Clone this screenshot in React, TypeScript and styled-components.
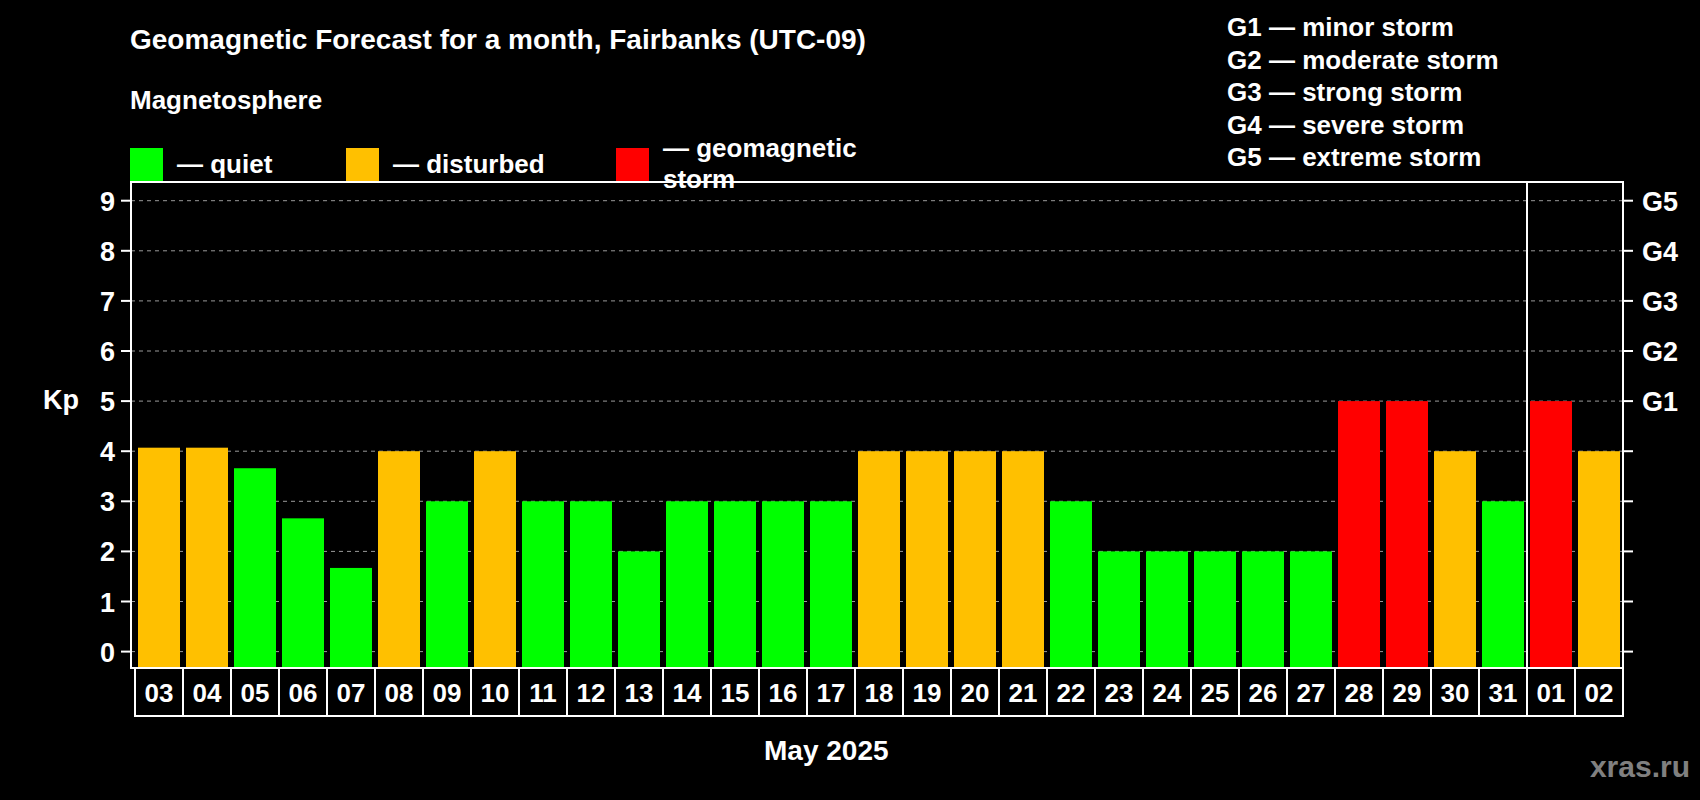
import React from "react";
import styled, { createGlobalStyle } from "styled-components";

const Global = createGlobalStyle`
  html, body { margin: 0; padding: 0; background: #000; }
  body { font-family: "Liberation Sans", Arial, sans-serif; }
`;

const Page = styled.div`
  width: 1700px;
  height: 800px;
  background: #000;
  color: #fff;
  font-weight: bold;
  display: flex;
  flex-direction: column;
  overflow: hidden;
`;

const Header = styled.div`
  height: 170px;
  display: flex;
  justify-content: space-between;
`;

const LeftHead = styled.div`
  padding: 24px 0 0 130px;
  display: flex;
  flex-direction: column;
`;

const Title = styled.div`
  font-size: 28px;
  line-height: 32px;
`;

const Sub = styled.div`
  font-size: 26px;
  line-height: 30px;
  margin-top: 29px;
`;

const LegendRow = styled.div`
  display: flex;
  align-items: center;
  margin-top: 18px;
`;

const LegendItem = styled.div<{ $w: number }>`
  display: flex;
  align-items: center;
  width: ${(p) => p.$w}px;
  font-size: 26px;
`;

const Swatch = styled.span<{ $c: string }>`
  width: 33px;
  height: 33px;
  background: ${(p) => p.$c};
  margin-right: 14px;
  flex: none;
`;

const GList = styled.div`
  padding: 11px 0 0 0;
  width: 473px;
  font-size: 26px;
  line-height: 32.5px;
`;

const Chart = styled.svg`
  display: block;
  width: 1700px;
  height: 555px;
`;

const Footer = styled.div`
  flex: 1;
  display: flex;
  align-items: flex-start;
`;

const Month = styled.div`
  margin-left: 764px;
  margin-top: 10px;
  font-size: 28px;
`;

const Brand = styled.div`
  margin-left: auto;
  margin-right: 10px;
  margin-top: 25px;
  font-size: 30px;
  color: #808080;
`;

const GREEN = "#00ff00";
const ORANGE = "#ffc000";
const RED = "#ff0000";

const days: [string, number][] = [
  ["03", 4.07], ["04", 4.07], ["05", 3.66], ["06", 2.66], ["07", 1.67], ["08", 4], ["09", 3],
  ["10", 4], ["11", 3], ["12", 3], ["13", 2], ["14", 3], ["15", 3], ["16", 3], ["17", 3],
  ["18", 4], ["19", 4], ["20", 4], ["21", 4], ["22", 3], ["23", 2], ["24", 2], ["25", 2],
  ["26", 2], ["27", 2], ["28", 5], ["29", 5], ["30", 4], ["31", 3], ["01", 5], ["02", 4],
];

const color = (v: number) => (v >= 5 ? RED : v >= 4 ? ORANGE : GREEN);

const Y0 = 651.6;
const U = 50.1;
const X0 = 135;
const CW = 48;
const TOP = 182;
const BOT = 668;
const RIGHT = 1623;
const yOf = (v: number) => Y0 - U * v;

export default function App() {
  return (
    <Page>
      <Global />
      <Header>
        <LeftHead>
          <Title>Geomagnetic Forecast for a month, Fairbanks (UTC-09)</Title>
          <Sub>Magnetosphere</Sub>
          <LegendRow>
            <LegendItem $w={216}><Swatch $c={GREEN} />— quiet</LegendItem>
            <LegendItem $w={270}><Swatch $c={ORANGE} />— disturbed</LegendItem>
            <LegendItem $w={320}><Swatch $c={RED} />— geomagnetic storm</LegendItem>
          </LegendRow>
        </LeftHead>
        <GList>
          <div>G1 — minor storm</div>
          <div>G2 — moderate storm</div>
          <div>G3 — strong storm</div>
          <div>G4 — severe storm</div>
          <div>G5 — extreme storm</div>
        </GList>
      </Header>
      <Chart viewBox="0 170 1700 555" fontFamily="Liberation Sans, Arial, sans-serif" fontWeight="bold">
        {Array.from({ length: 10 }, (_, i) => (
          <g key={i}>
            <line x1={131} x2={RIGHT} y1={yOf(i)} y2={yOf(i)} stroke="#9a9a9a" strokeWidth={1} strokeDasharray="4 4" />
            <line x1={121} x2={131} y1={yOf(i)} y2={yOf(i)} stroke="#fff" strokeWidth={2} />
            <line x1={RIGHT} x2={1633} y1={yOf(i)} y2={yOf(i)} stroke="#fff" strokeWidth={2} />
            <text x={115} y={yOf(i) + 10} fontSize={27} fill="#fff" textAnchor="end">{i}</text>
            {i >= 5 && (
              <text x={1642} y={yOf(i) + 10} fontSize={27} fill="#fff">G{i - 4}</text>
            )}
          </g>
        ))}
        {days.map(([d, v], i) => (
          <rect key={d} x={X0 + i * CW + 3} width={42} y={yOf(v)} height={BOT - yOf(v)} fill={color(v)} />
        ))}
        <rect x={131} y={TOP} width={RIGHT - 131} height={BOT - TOP} fill="none" stroke="#fff" strokeWidth={2} />
        <line x1={X0 + 29 * CW} x2={X0 + 29 * CW} y1={TOP} y2={BOT} stroke="#fff" strokeWidth={2} />
        <rect x={X0} y={BOT} width={RIGHT - X0} height={48} fill="none" stroke="#fff" strokeWidth={2} />
        {days.map(([d], i) => (
          <g key={"c" + d}>
            {i > 0 && <line x1={X0 + i * CW} x2={X0 + i * CW} y1={BOT} y2={BOT + 48} stroke="#fff" strokeWidth={2} />}
            <text x={X0 + i * CW + CW / 2} y={BOT + 34} fontSize={26} fill="#fff" textAnchor="middle">{d}</text>
          </g>
        ))}
        <text x={43} y={409} fontSize={27} fill="#fff">Kp</text>
      </Chart>
      <Footer>
        <Month>May 2025</Month>
        <Brand>xras.ru</Brand>
      </Footer>
    </Page>
  );
}
